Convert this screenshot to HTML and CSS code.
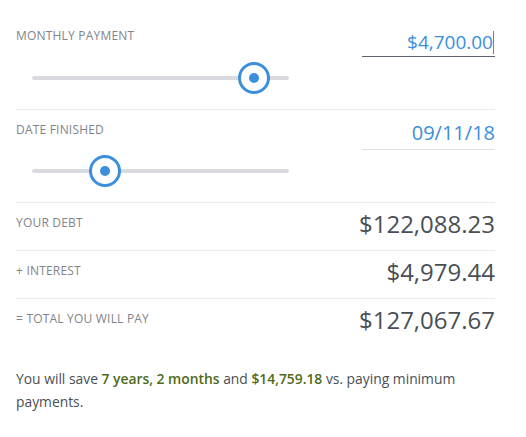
FILE: index.html
```html
<!DOCTYPE html>
<html>
<head>
<meta charset="utf-8">
<link rel="stylesheet" href="styles.css">
</head>
<body>
<div class="calc">
  <section class="control first">
    <div class="head">
      <div class="label">MONTHLY PAYMENT</div>
      <div class="field active"><span class="val">$4,700.00</span><span class="caret"></span></div>
    </div>
    <div class="slider">
      <div class="track"></div>
      <div class="thumb" style="left: 221.5px"></div>
    </div>
  </section>
  <section class="control second">
    <div class="head">
      <div class="label">DATE FINISHED</div>
      <div class="field date"><span class="val">09/11/18</span></div>
    </div>
    <div class="slider">
      <div class="track"></div>
      <div class="thumb" style="left: 72.5px"></div>
    </div>
  </section>
  <div class="stat">
    <div class="label">YOUR DEBT</div>
    <div class="amount">$122,088.23</div>
  </div>
  <div class="stat">
    <div class="label">+ INTEREST</div>
    <div class="amount">$4,979.44</div>
  </div>
  <div class="stat last">
    <div class="label">= TOTAL YOU WILL PAY</div>
    <div class="amount">$127,067.67</div>
  </div>
  <p class="summary">You will save <strong>7 years, 2 months</strong> and <strong>$14,759.18</strong> vs. paying minimum payments.</p>
</div>
</body>
</html>
```
FILE: styles.css
```css
html, body {
  margin: 0;
  padding: 0;
  background: #ffffff;
}
body {
  font-family: "Open Sans", "Liberation Sans", sans-serif;
  color: #4a4f55;
}
.calc {
  width: 479px;
  padding: 0 0 0 16px;
}
.control {
  border-bottom: 1px solid #ececef;
}
.control.first {
  padding: 28px 0 15px;
}
.control.second {
  padding: 10px 0 15px;
}
.head {
  display: flex;
  justify-content: space-between;
  align-items: flex-start;
}
.label {
  font-size: 12px;
  line-height: 15px;
  letter-spacing: 0.2px;
  color: #7f848b;
}
.second .label {
  margin-top: 2px;
}
.field {
  width: 133px;
  text-align: right;
  font-size: 19px;
  line-height: 24px;
  color: #3b8fdb;
  border-bottom: 1px solid #dfe0e3;
  padding-bottom: 2px;
  position: relative;
}
.field.active {
  margin-top: 2px;
  border-bottom-color: #5c6570;
  padding-right: 2px;
  width: 131px;
}
.caret {
  position: absolute;
  right: 1px;
  top: 1px;
  width: 1px;
  height: 23px;
  background: #3b8fdb;
}
.field.date {
  font-size: 20px;
  line-height: 26px;
  padding-bottom: 3px;
}
.slider {
  position: relative;
  width: 257px;
  height: 32px;
  margin: 5px 0 0 16px;
}
.track {
  position: absolute;
  left: 0;
  right: 0;
  top: 14px;
  height: 4px;
  border-radius: 2px;
  background: #d9dadf;
}
.thumb {
  position: absolute;
  top: 0;
  width: 26px;
  height: 26px;
  margin-left: -16px;
  border: 3px solid #3b8fdb;
  border-radius: 50%;
  background: #ffffff;
}
.thumb::after {
  content: "";
  position: absolute;
  left: 8px;
  top: 8px;
  width: 10px;
  height: 10px;
  border-radius: 50%;
  background: #3b8fdb;
}
.stat {
  display: flex;
  justify-content: space-between;
  align-items: flex-start;
  padding: 5px 0 10px;
  border-bottom: 1px solid #ececef;
}
.stat.last {
  border-bottom: none;
}
.stat .label {
  margin-top: 7px;
}
.amount {
  font-size: 24px;
  line-height: 32px;
  color: #4a4f55;
}
.summary {
  margin: 21px 0 0;
  font-size: 13.85px;
  line-height: 23px;
  color: #4a4f55;
}
.summary strong {
  font-weight: 600;
  color: #506a19;
}
```
